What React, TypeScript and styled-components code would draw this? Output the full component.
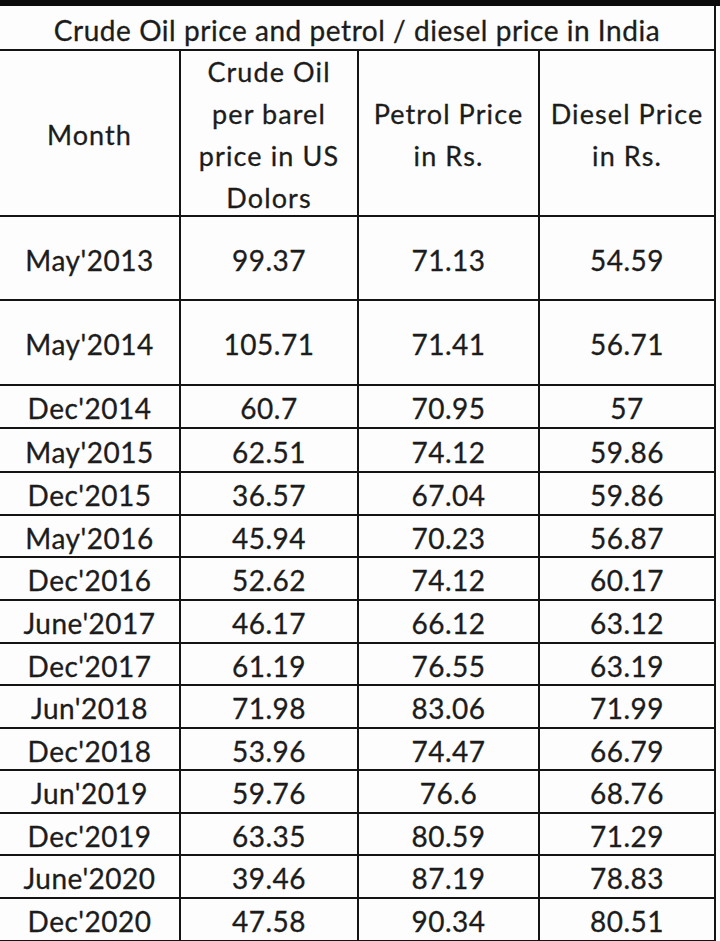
import React from "react";
import styled, { createGlobalStyle } from "styled-components";

const Global = createGlobalStyle`
  html, body { margin: 0; padding: 0; background: #ffffff; }
  body { font-family: Lato, "Open Sans", sans-serif; color: #1c1c1c; }
`;

const COLS = "181px 178px 181px 176px";

const Page = styled.div`
  width: 720px;
  height: 941px;
  overflow: hidden;
  background: #fdfdfd;
`;

const TopStrip = styled.div`
  height: 6px;
  background: #0c0c0c;
`;

const Sheet = styled.div`
  width: 716px;
  display: flex;
  flex-direction: column;
  -webkit-text-stroke: 0.3px #1c1c1c;
`;

const TitleRow = styled.div`
  box-sizing: border-box;
  height: 45px;
  border-right: 2px solid #141414;
  border-bottom: 2px solid #141414;
  display: flex;
  align-items: center;
  justify-content: center;
  padding-top: 4px;
  font-size: 28px;
  letter-spacing: 0.55px;
  line-height: 1;
  white-space: nowrap;
`;

const Row = styled.div<{ $h: number }>`
  display: grid;
  grid-template-columns: ${COLS};
  grid-template-rows: minmax(0, 1fr);
  height: ${(p) => p.$h}px;
  flex: none;
`;

const Cell = styled.div<{ $head?: boolean }>`
  box-sizing: border-box;
  min-height: 0;
  border-right: 2px solid #141414;
  border-bottom: 2px solid #141414;
  display: flex;
  flex-direction: column;
  align-items: center;
  justify-content: center;
  text-align: center;
  font-size: ${(p) => (p.$head ? 27 : 28)}px;
  letter-spacing: ${(p) => (p.$head ? 1.1 : 0.5)}px;
  line-height: ${(p) => (p.$head ? "42px" : "1.2")};
  padding-top: ${(p) => (p.$head ? 4 : 5)}px;
  white-space: nowrap;
`;

const Line = styled.span`
  display: block;
`;

type Rec = { m: string; c: string; p: string; d: string; h: number };

const data: Rec[] = [
  { m: "May'2013", c: "99.37", p: "71.13", d: "54.59", h: 84 },
  { m: "May'2014", c: "105.71", p: "71.41", d: "56.71", h: 85 },
  { m: "Dec'2014", c: "60.7", p: "70.95", d: "57", h: 43 },
  { m: "May'2015", c: "62.51", p: "74.12", d: "59.86", h: 44 },
  { m: "Dec'2015", c: "36.57", p: "67.04", d: "59.86", h: 43 },
  { m: "May'2016", c: "45.94", p: "70.23", d: "56.87", h: 42 },
  { m: "Dec'2016", c: "52.62", p: "74.12", d: "60.17", h: 43 },
  { m: "June'2017", c: "46.17", p: "66.12", d: "63.12", h: 43 },
  { m: "Dec'2017", c: "61.19", p: "76.55", d: "63.19", h: 42 },
  { m: "Jun'2018", c: "71.98", p: "83.06", d: "71.99", h: 43 },
  { m: "Dec'2018", c: "53.96", p: "74.47", d: "66.79", h: 42 },
  { m: "Jun'2019", c: "59.76", p: "76.6", d: "68.76", h: 43 },
  { m: "Dec'2019", c: "63.35", p: "80.59", d: "71.29", h: 42 },
  { m: "June'2020", c: "39.46", p: "87.19", d: "78.83", h: 43 },
  { m: "Dec'2020", c: "47.58", p: "90.34", d: "80.51", h: 43 },
];

export default function App() {
  return (
    <Page>
      <Global />
      <TopStrip />
      <Sheet>
        <TitleRow>Crude Oil price and petrol / diesel price in India</TitleRow>
        <Row $h={166}>
          <Cell $head>
            <Line>Month</Line>
          </Cell>
          <Cell $head>
            <Line>Crude Oil</Line>
            <Line>per barel</Line>
            <Line>price in US</Line>
            <Line>Dolors</Line>
          </Cell>
          <Cell $head>
            <Line>Petrol Price</Line>
            <Line>in Rs.</Line>
          </Cell>
          <Cell $head>
            <Line>Diesel Price</Line>
            <Line>in Rs.</Line>
          </Cell>
        </Row>
        {data.map((r) => (
          <Row key={r.m} $h={r.h}>
            <Cell>{r.m}</Cell>
            <Cell>{r.c}</Cell>
            <Cell>{r.p}</Cell>
            <Cell>{r.d}</Cell>
          </Row>
        ))}
      </Sheet>
    </Page>
  );
}
